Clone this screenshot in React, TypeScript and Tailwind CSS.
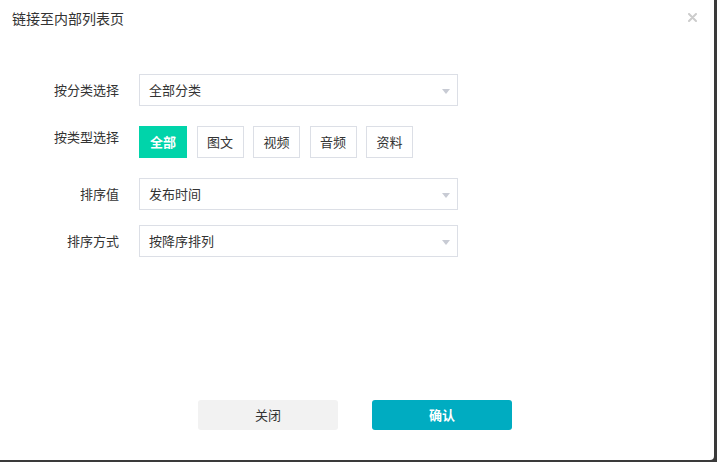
import React from 'react';

const font = { fontFamily: '"Noto Sans CJK SC", "Noto Sans", sans-serif' };

function Select({ value }: { value: string }) {
  return (
    <div className="relative flex h-[32px] w-[319px] items-center border border-[#dcdfe6] bg-white pl-[9px] text-[13px] text-[#333]">
      {value}
      <span className="absolute right-[7px] top-[14px] h-0 w-0 border-x-[4px] border-t-[5px] border-x-transparent border-t-[#c8cbd4]" />
    </div>
  );
}

export default function App() {
  const types = ['全部', '图文', '视频', '音频', '资料'];
  return (
    <div className="h-[462px] w-[717px] bg-[#3a3a3a]" style={font}>
      <div className="relative h-[460px] w-[714px] rounded-br-[4px] bg-white">
        <div className="flex h-[36px] items-center pl-[12px] text-[14px] text-[#333]">
          链接至内部列表页
        </div>
        <svg
          className="absolute right-[17px] top-[13px]"
          width="9"
          height="9"
          viewBox="0 0 9 9"
        >
          <path d="M1 1L8 8M8 1L1 8" stroke="#cccccc" strokeWidth="2" strokeLinecap="round" />
        </svg>

        <div className="mt-[38px] flex flex-col">
          <div className="flex items-center">
            <div className="w-[119px] text-right text-[13px] text-[#333]">按分类选择</div>
            <div className="ml-[20px]">
              <Select value="全部分类" />
            </div>
          </div>

          <div className="mt-[20px] flex items-start">
            <div className="w-[119px] pt-[1px] text-right text-[13px] text-[#333]">按类型选择</div>
            <div className="ml-[20px] flex gap-[9.5px]">
              {types.map((t, i) => (
                <div
                  key={t}
                  className={
                    i === 0
                      ? 'flex h-[32px] w-[48px] items-center justify-center bg-[#00d4aa] text-[13px] font-bold text-white'
                      : 'flex h-[32px] w-[47px] items-center justify-center border border-[#dcdfe6] text-[13px] text-[#333]'
                  }
                >
                  {t}
                </div>
              ))}
            </div>
          </div>

          <div className="mt-[20px] flex items-center">
            <div className="w-[119px] text-right text-[13px] text-[#333]">排序值</div>
            <div className="ml-[20px]">
              <Select value="发布时间" />
            </div>
          </div>

          <div className="mt-[15px] flex items-center">
            <div className="w-[119px] text-right text-[13px] text-[#333]">排序方式</div>
            <div className="ml-[20px]">
              <Select value="按降序排列" />
            </div>
          </div>
        </div>

        <div className="mt-[143px] flex pl-[198px]">
          <button className="h-[30px] w-[140px] rounded-[3px] bg-[#f2f2f2] text-[13px] text-[#333]">
            关闭
          </button>
          <button className="ml-[34px] h-[30px] w-[140px] rounded-[3px] bg-[#00acc1] text-[13px] font-bold text-white">
            确认
          </button>
        </div>
      </div>
    </div>
  );
}
